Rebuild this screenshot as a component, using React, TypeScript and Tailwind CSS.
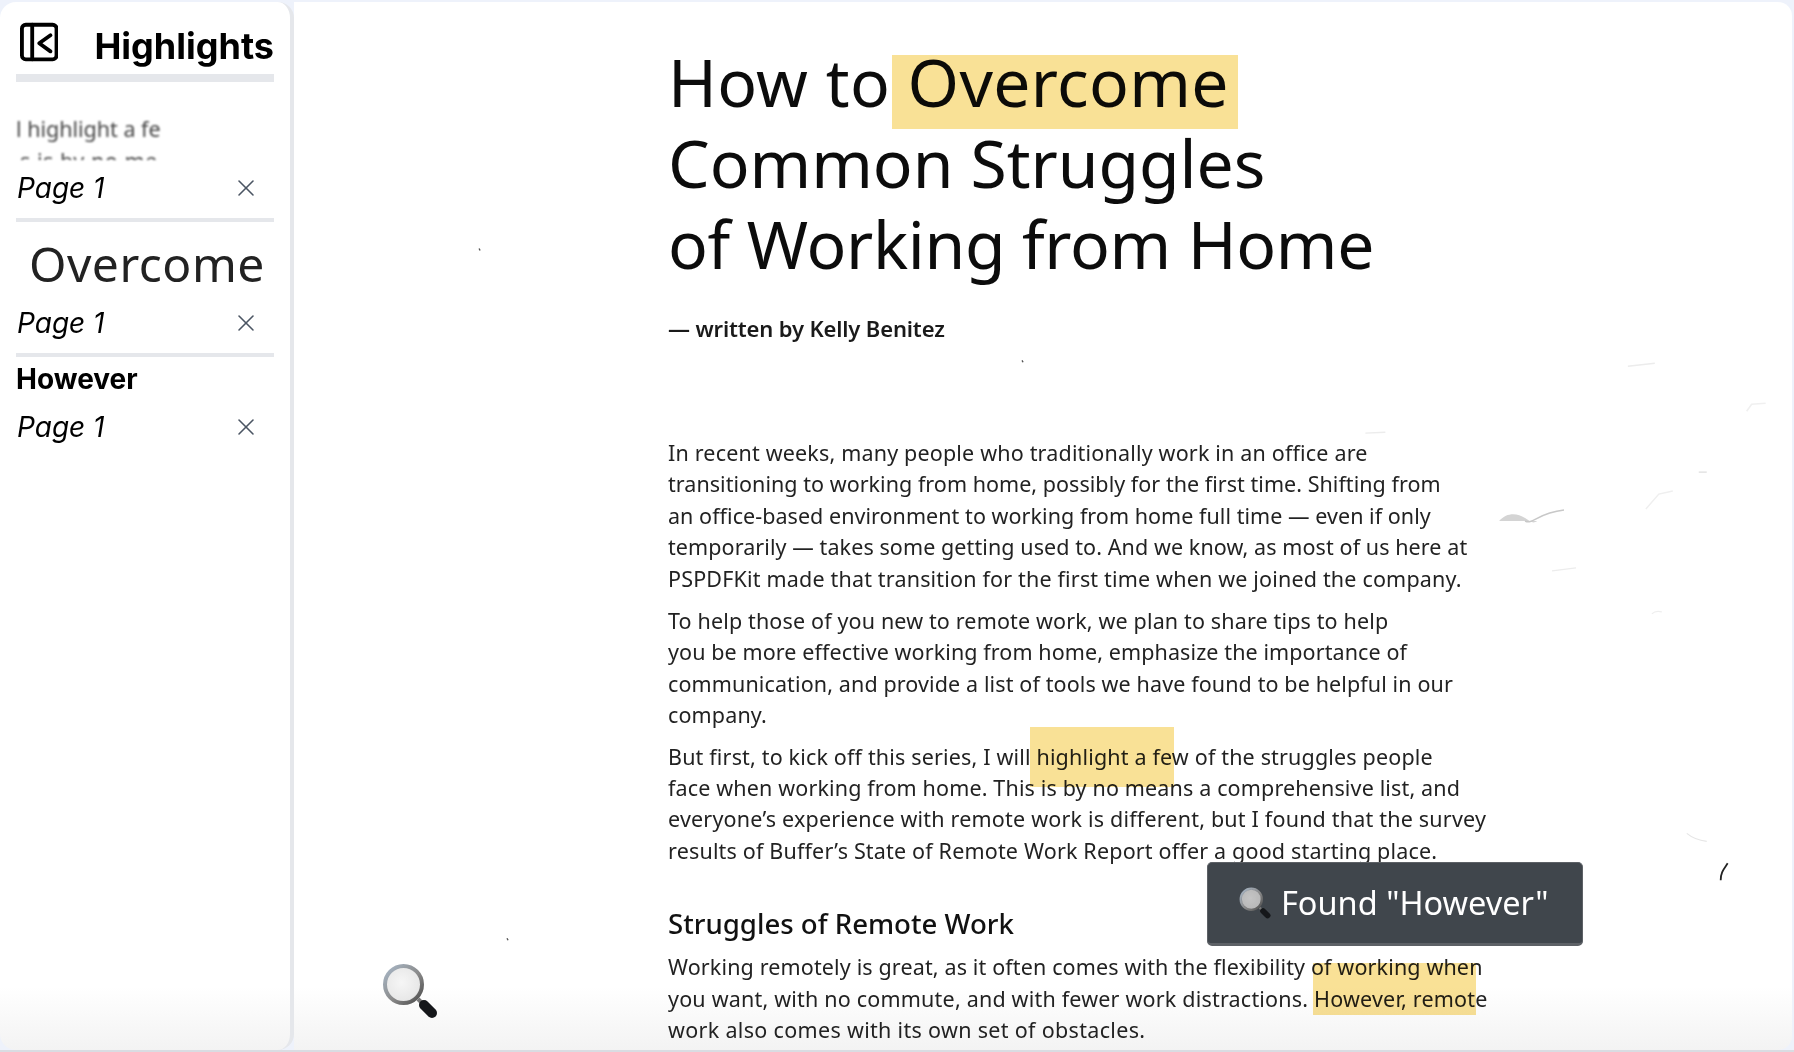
import React from 'react';
import { X } from 'lucide-react';

type Line = { text: string; tracking: string };

const ARTICLE: { className: string; lines: Line[] }[] = [
  {
    className: 'mt-[7px]',
    lines: [
      { text: 'In recent weeks, many people who traditionally work in an office are', tracking: 'tracking-[0.18px]' },
      { text: 'transitioning to working from home, possibly for the first time. Shifting from', tracking: 'tracking-[0.04px]' },
      { text: 'an office-based environment to working from home full time — even if only', tracking: 'tracking-[0.05px]' },
      { text: 'temporarily — takes some getting used to. And we know, as most of us here at', tracking: 'tracking-[0.09px]' },
      { text: 'PSPDFKit made that transition for the first time when we joined the company.', tracking: 'tracking-[0.18px]' },
    ],
  },
  {
    className: 'mt-[11px]',
    lines: [
      { text: 'To help those of you new to remote work, we plan to share tips to help', tracking: 'tracking-[0.15px]' },
      { text: 'you be more effective working from home, emphasize the importance of', tracking: 'tracking-[0.1px]' },
      { text: 'communication, and provide a list of tools we have found to be helpful in our', tracking: 'tracking-[0.12px]' },
      { text: 'company.', tracking: 'tracking-[0.14px]' },
    ],
  },
  {
    className: 'mt-[10px]',
    lines: [
      { text: 'But first, to kick off this series, I will highlight a few of the struggles people', tracking: 'tracking-[0.17px]' },
      { text: 'face when working from home. This is by no means a comprehensive list, and', tracking: 'tracking-[0.15px]' },
      { text: 'everyone’s experience with remote work is different, but I found that the survey', tracking: 'tracking-[0.2px]' },
      { text: 'results of Buffer’s State of Remote Work Report offer a good starting place.', tracking: 'tracking-[0.18px]' },
    ],
  },
];

const LAST_PARAGRAPH: Line[] = [
  { text: 'Working remotely is great, as it often comes with the flexibility of working when', tracking: 'tracking-[0.14px]' },
  { text: 'you want, with no commute, and with fewer work distractions. However, remote', tracking: 'tracking-[0.2px]' },
  { text: 'work also comes with its own set of obstacles.', tracking: 'tracking-[0.32px]' },
];

function Magnifier({ className, dim }: { className: string; dim?: boolean }) {
  return (
    <svg viewBox="0 0 56 56" className={className}>
      <defs>
        <linearGradient id="lens-rim" x1="0" y1="0" x2="1" y2="1">
          <stop offset="0" stopColor="#a9b8c8" />
          <stop offset="0.55" stopColor="#8a8a8a" />
          <stop offset="1" stopColor="#4a4a4a" />
        </linearGradient>
        <radialGradient id="lens-glass" cx="0.45" cy="0.45" r="0.6">
          <stop offset="0" stopColor="#f6f6f6" />
          <stop offset="0.8" stopColor="#e8e8e8" />
          <stop offset="1" stopColor="#cfcfcf" />
        </radialGradient>
      </defs>
      <line x1="36" y1="36" x2="41" y2="41" stroke="#777" strokeWidth="4" />
      <line x1="42" y1="42" x2="50" y2="50" stroke="#15171a" strokeWidth="10" strokeLinecap="round" />
      <circle cx="21.5" cy="21.5" r="18.5" fill="url(#lens-glass)" stroke="url(#lens-rim)" strokeWidth="4" />
      {dim && <circle cx="21.5" cy="21.5" r="17" fill="#000" opacity="0.2" />}
    </svg>
  );
}

function SidebarIcon() {
  return (
    <svg viewBox="0 0 40 40" className="h-10 w-10" fill="none" stroke="#000" strokeWidth="4" strokeLinejoin="round" strokeLinecap="round">
      <rect x="2" y="2" width="36" height="36" rx="4" />
      <line x1="12.7" y1="2" x2="12.7" y2="38" />
      <path d="M31.7 13 L20 21.3 L31.7 29.7" />
    </svg>
  );
}

function PageRow() {
  return (
    <div className="flex items-center justify-between text-black">
      <span className="pl-[1px] text-[28px] italic leading-[38px]">Page 1</span>
      <X className="mr-[14px] h-[28px] w-[28px] text-[#4b5563]" strokeWidth={1.3} />
    </div>
  );
}

function PaperSpecks() {
  return (
    <svg viewBox="0 0 1498 1050" className="absolute inset-0 h-full w-full" fill="none">
      <path d="M1206 520 C1214 511 1224 512 1232 517 C1238 521 1240 523 1244 520 Z" fill="#d4d4d4" />
      <path d="M1232 520 C1240 524 1244 512 1271 509" stroke="#c8c8c8" strokeWidth="1.6" />
      <path d="M1353 508 L1366 493 L1380 490" stroke="#efefef" strokeWidth="1.5" />
      <path d="M1406 471 L1414 471" stroke="#dcdcdc" strokeWidth="1.2" />
      <path d="M1259 570 L1283 567" stroke="#ececec" strokeWidth="1.4" />
      <path d="M1359 613 C1362 610 1365 610 1369 611" stroke="#eeeeee" strokeWidth="1.2" />
      <path d="M1454 410 L1459 403 L1473 402" stroke="#f0f0f0" strokeWidth="1.6" />
      <path d="M1335 365 L1362 362 M1072 432 L1092 431" stroke="#ececec" strokeWidth="1.4" />
      <path d="M1435 863 C1431 869 1428 872 1428 880" stroke="#222" strokeWidth="1.8" />
      <path d="M1394 833 C1400 838 1406 840 1414 841" stroke="#e6e6e6" strokeWidth="1.2" />
      <path d="M212 938 L213 940 M184 247 L185 249 M728 359 L729 361" stroke="#555" strokeWidth="1.4" />
    </svg>
  );
}

function Sidebar() {
  return (
    <aside className="h-full w-[294px] shrink-0 rounded-[16px] border-r-4 border-[#e5e7eb] bg-[linear-gradient(to_bottom,#ffffff_94%,#f3f3f3_100%)] px-4">
      <div className="flex h-[80px] items-center border-b-8 border-[#e5e7eb] pl-1 pt-[8px]">
        <SidebarIcon />
        <h1 className="ml-[36px] mt-[8px] text-[36px] font-bold leading-none text-black">Highlights</h1>
      </div>
      <div className="mt-[31px] h-[47px] w-[144px] overflow-hidden font-['Noto_Sans',sans-serif] text-[21.5px] leading-[32px] text-[#444] blur-[0.8px]">
        <div className="whitespace-nowrap">l highlight a few</div>
        <div className="whitespace-nowrap pl-1 tracking-wide">s is by no means</div>
      </div>
      <div className="mt-[9px]">
        <PageRow />
      </div>
      <div className="mt-[11px] h-1 bg-[#e5e7eb]" />
      <div className="mt-[18px] pl-[13px] font-['Noto_Sans',sans-serif] text-[48px] leading-[48px] tracking-[0.5px] text-[#222] blur-[0.5px]">
        Overcome
      </div>
      <div className="mt-[16px]">
        <PageRow />
      </div>
      <div className="mt-[11px] h-1 bg-[#e5e7eb]" />
      <div className="mt-[6px] text-[28px] font-bold leading-[32px] text-black">However</div>
      <div className="mt-[13px]">
        <PageRow />
      </div>
    </aside>
  );
}

export default function App() {
  return (
    <div className="h-[1052px] w-[1794px] overflow-hidden border-b-2 border-[#d9dce2] bg-[#eef2fb] pt-[2px] font-['Inter',sans-serif]">
      <div className="flex h-full pr-[2px]">
        <Sidebar />
        <main className="relative flex-1 overflow-hidden rounded-r-[14px] bg-[linear-gradient(to_bottom,#ffffff_94%,#f3f3f3_100%)] pl-[374px] pt-[39px] font-['Noto_Sans',sans-serif] text-[#111]">
          <PaperSpecks />
          <div className="relative">
            <div className="whitespace-nowrap text-[66px] leading-[81px] text-[#0c0c0c]">
              <div className="tracking-[0.3px]">How to Overcome</div>
              <div className="tracking-[-0.05px]">Common Struggles</div>
              <div className="tracking-[-0.35px]">of Working from Home</div>
            </div>
            <p className="mt-[28px] whitespace-nowrap text-[22px] font-semibold leading-[32px] tracking-[-0.15px] text-[#1a1a1a]">
              — written by Kelly Benitez
            </p>
            <div className="mt-[93px] whitespace-nowrap text-[21.5px] leading-[31.4px] text-[#222] blur-[0.3px]">
              {ARTICLE.map((para, i) => (
                <div key={i} className={para.className}>
                  {para.lines.map((line) => (
                    <div key={line.text} className={line.tracking}>{line.text}</div>
                  ))}
                </div>
              ))}
              <h2 className="mt-[38px] text-[27.6px] font-medium leading-[38px] text-[#111]">Struggles of Remote Work</h2>
              <div className="mt-[9px]">
                {LAST_PARAGRAPH.map((line) => (
                  <div key={line.text} className={line.tracking}>{line.text}</div>
                ))}
              </div>
            </div>
          </div>

          {/* highlight rects sit over the page, offsets are relative to main */}
          <div className="absolute left-[598px] top-[53px] h-[74px] w-[346px] bg-[#f9e196] mix-blend-multiply" />
          <div className="absolute left-[736px] top-[725px] h-[60px] w-[144px] bg-[#f9e196] mix-blend-multiply" />
          <div className="absolute left-[1019px] top-[961px] h-[52px] w-[163px] bg-[#f9e196] mix-blend-multiply" />

          <div className="absolute left-[913px] top-[860px] flex h-[84px] w-[376px] items-center gap-[10px] rounded-[5px] border border-b-[3px] border-[#5d6166] bg-[#40464c] pl-[31px] text-[32.5px] text-white">
            <Magnifier className="h-[32px] w-[32px]" dim />
            <span className="whitespace-nowrap">Found "However"</span>
          </div>

          <Magnifier className="absolute left-[88px] top-[961px] h-[56px] w-[56px]" />
        </main>
      </div>
    </div>
  );
}
